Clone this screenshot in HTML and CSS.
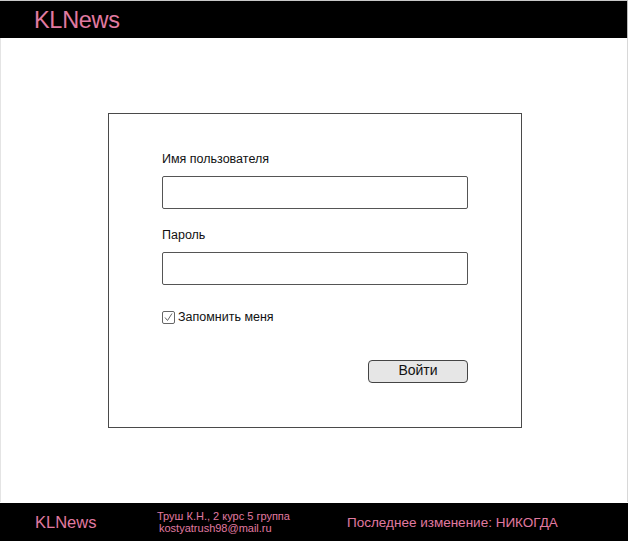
FILE: index.html
```html
<!DOCTYPE html>
<html lang="ru">
<head>
<meta charset="utf-8">
<title>KLNews</title>
<link rel="stylesheet" href="styles.css">
</head>
<body>
<div class="page">
  <header class="header">
    <div class="logo">KLNews</div>
  </header>
  <main class="main">
    <form class="login">
      <label class="label">Имя пользователя</label>
      <div class="input"></div>
      <label class="label label-pass">Пароль</label>
      <div class="input"></div>
      <div class="remember">
        <span class="check">
          <svg width="11" height="11" viewBox="0 0 11 11"><path d="M2 5.5 L4.5 8.5 L9 1.5" fill="none" stroke="#666" stroke-width="1"/></svg>
        </span>
        <span class="remember-text">Запомнить меня</span>
      </div>
      <div class="actions">
        <div class="button">Войти</div>
      </div>
    </form>
  </main>
  <footer class="footer">
    <div class="flogo">KLNews</div>
    <div class="author">
      <div>Труш К.Н., 2 курс 5 группа</div>
      <div class="email">kostyatrush98@mail.ru</div>
    </div>
    <div class="changed">Последнее изменение: НИКОГДА</div>
  </footer>
</div>
</body>
</html>
```
FILE: styles.css
```css
html, body {
  margin: 0;
  padding: 0;
  background: #fff;
}
body {
  font-family: "Liberation Sans", Arial, sans-serif;
  color: #111;
}
.page {
  width: 628px;
  height: 541px;
  display: flex;
  flex-direction: column;
  border-top: 1px solid #c8c8c8;
  box-sizing: border-box;
}
.header {
  background: #000;
  height: 37px;
  display: flex;
  align-items: center;
  padding-left: 34px;
  border-right: 1px solid #bbb;
}
.logo {
  color: #e07aa0;
  font-size: 23.5px;
  letter-spacing: -0.3px;
  margin-top: 2px;
}
.main {
  height: 464px;
  border-left: 1px solid #e4e4e4;
  border-right: 1px solid #d8d8d8;
  padding-top: 75px;
  padding-left: 107px;
  box-sizing: border-box;
}
.login {
  width: 414px;
  height: 315px;
  box-sizing: border-box;
  border: 1px solid #4a4a4a;
  padding: 38px 0 0 53px;
  display: flex;
  flex-direction: column;
  margin: 0;
}
.label {
  font-size: 12.5px;
  line-height: 14px;
  height: 14px;
  color: #111;
}
.label-pass {
  margin-top: 19px;
}
.input {
  margin-top: 10px;
  width: 306px;
  height: 33px;
  box-sizing: border-box;
  border: 1px solid #555;
  border-radius: 2px;
  background: #fff;
}
.remember {
  margin-top: 25px;
  display: flex;
  align-items: center;
  height: 14px;
}
.check {
  width: 13px;
  height: 13px;
  box-sizing: border-box;
  border: 1px solid #666;
  border-radius: 2px;
  display: flex;
  align-items: center;
  justify-content: center;
}
.remember-text {
  margin-left: 3px;
  font-size: 12.5px;
  color: #111;
}
.actions {
  margin-top: 36px;
  width: 306px;
  display: flex;
  justify-content: flex-end;
}
.button {
  width: 100px;
  height: 23px;
  box-sizing: border-box;
  border: 1px solid #444;
  border-radius: 4px;
  background: #e6e6e6;
  font-size: 14px;
  line-height: 19px;
  text-align: center;
  color: #111;
}
.footer {
  margin-top: 1px;
  background: #000;
  height: 38px;
  display: flex;
  align-items: center;
  padding-left: 35px;
  overflow: hidden;
  white-space: nowrap;
}
.flogo {
  color: #e07aa0;
  font-size: 16.5px;
  width: 122px;
}
.author {
  color: #e07aa0;
  font-size: 11px;
  line-height: 12px;
  width: 190px;
}
.email {
  padding-left: 2px;
}
.changed {
  color: #e07aa0;
  font-size: 13.5px;
}
```
